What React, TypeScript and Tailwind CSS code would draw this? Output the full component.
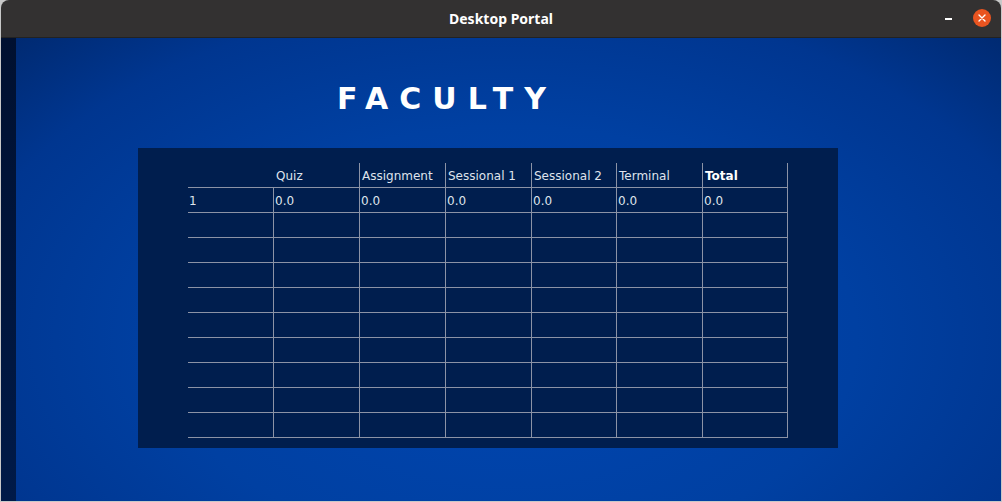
import React from "react";

const headers = ["", "Quiz", "Assignment", "Sessional 1", "Sessional 2", "Terminal", "Total"];
const widths = ["w-[86px]", "w-[86px]", "w-[86px]", "w-[86px]", "w-[85px]", "w-[86px]", "w-[85px]"];
const firstRow = ["1", "0.0", "0.0", "0.0", "0.0", "0.0", "0.0"];

export default function App() {
  const emptyRows = Array.from({ length: 9 });
  return (
    <div className="w-[1002px] h-[502px] bg-[#c8c8c8] flex flex-col overflow-hidden" style={{ fontFamily: "'DejaVu Sans', sans-serif" }}>
      {/* title bar */}
      <div className="h-[38px] mx-[1px] bg-[#333131] rounded-t-[8px] flex items-center relative shrink-0 border-b border-[#222]">
        <div className="flex-1 text-center text-white text-[14px] font-bold" style={{ fontFamily: "'Noto Sans', 'Open Sans', sans-serif" }}>
          Desktop Portal
        </div>
        <div className="absolute right-[10px] top-[9px] flex items-center gap-[21px]">
          <div className="w-[7px] h-[2px] bg-white mt-[2px]" />
          <div className="w-[18px] h-[18px] rounded-full bg-[#e95420] flex items-center justify-center">
            <svg width="8" height="8" viewBox="0 0 8 8">
              <path d="M1 1 L7 7 M7 1 L1 7" stroke="white" strokeWidth="1.4" strokeLinecap="round" />
            </svg>
          </div>
        </div>
      </div>
      {/* body */}
      <div className="flex-1 flex mx-[1px] mb-[1px]">
        <div className="w-[15px] bg-[linear-gradient(to_bottom,#001030,#001a48)]" />
        <div className="flex-1 bg-[radial-gradient(ellipse_at_50%_65%,#0046b2_0%,#0040a2_50%,#003690_80%,#002a72_100%)] pl-[122px] pt-[43px]">
          <div className="pl-[199px] h-[67px] pt-[2px]">
            <div className="text-white text-[30px] font-bold tracking-[11px] leading-[32px]">FACULTY</div>
          </div>
          <div className="w-[700px] h-[300px] bg-[#001e4e] pl-[50px] pt-[15px]">
            <div className="w-[600px] text-[12px] text-[#dfe3ec]">
              <div className="flex h-[25px] border-b border-[#8b93a6]">
                {headers.map((h, i) => (
                  <div key={i} className={`${widths[i]} border-r border-[#8b93a6] pl-[2px] pt-[4px] ${h === "Total" ? "font-bold text-white" : ""} ${i === 0 ? "border-r-0" : ""}`}>
                    {h}
                  </div>
                ))}
              </div>
              <div className="flex h-[25px] border-b border-[#8b93a6]">
                {firstRow.map((v, i) => (
                  <div key={i} className={`${widths[i]} border-r border-[#8b93a6] pl-[1px] pt-[4px]`}>{v}</div>
                ))}
              </div>
              {emptyRows.map((_, r) => (
                <div key={r} className="flex h-[25px] border-b border-[#8b93a6]">
                  {widths.map((w, i) => (
                    <div key={i} className={`${w} border-r border-[#8b93a6]`} />
                  ))}
                </div>
              ))}
            </div>
          </div>
        </div>
      </div>
    </div>
  );
}
